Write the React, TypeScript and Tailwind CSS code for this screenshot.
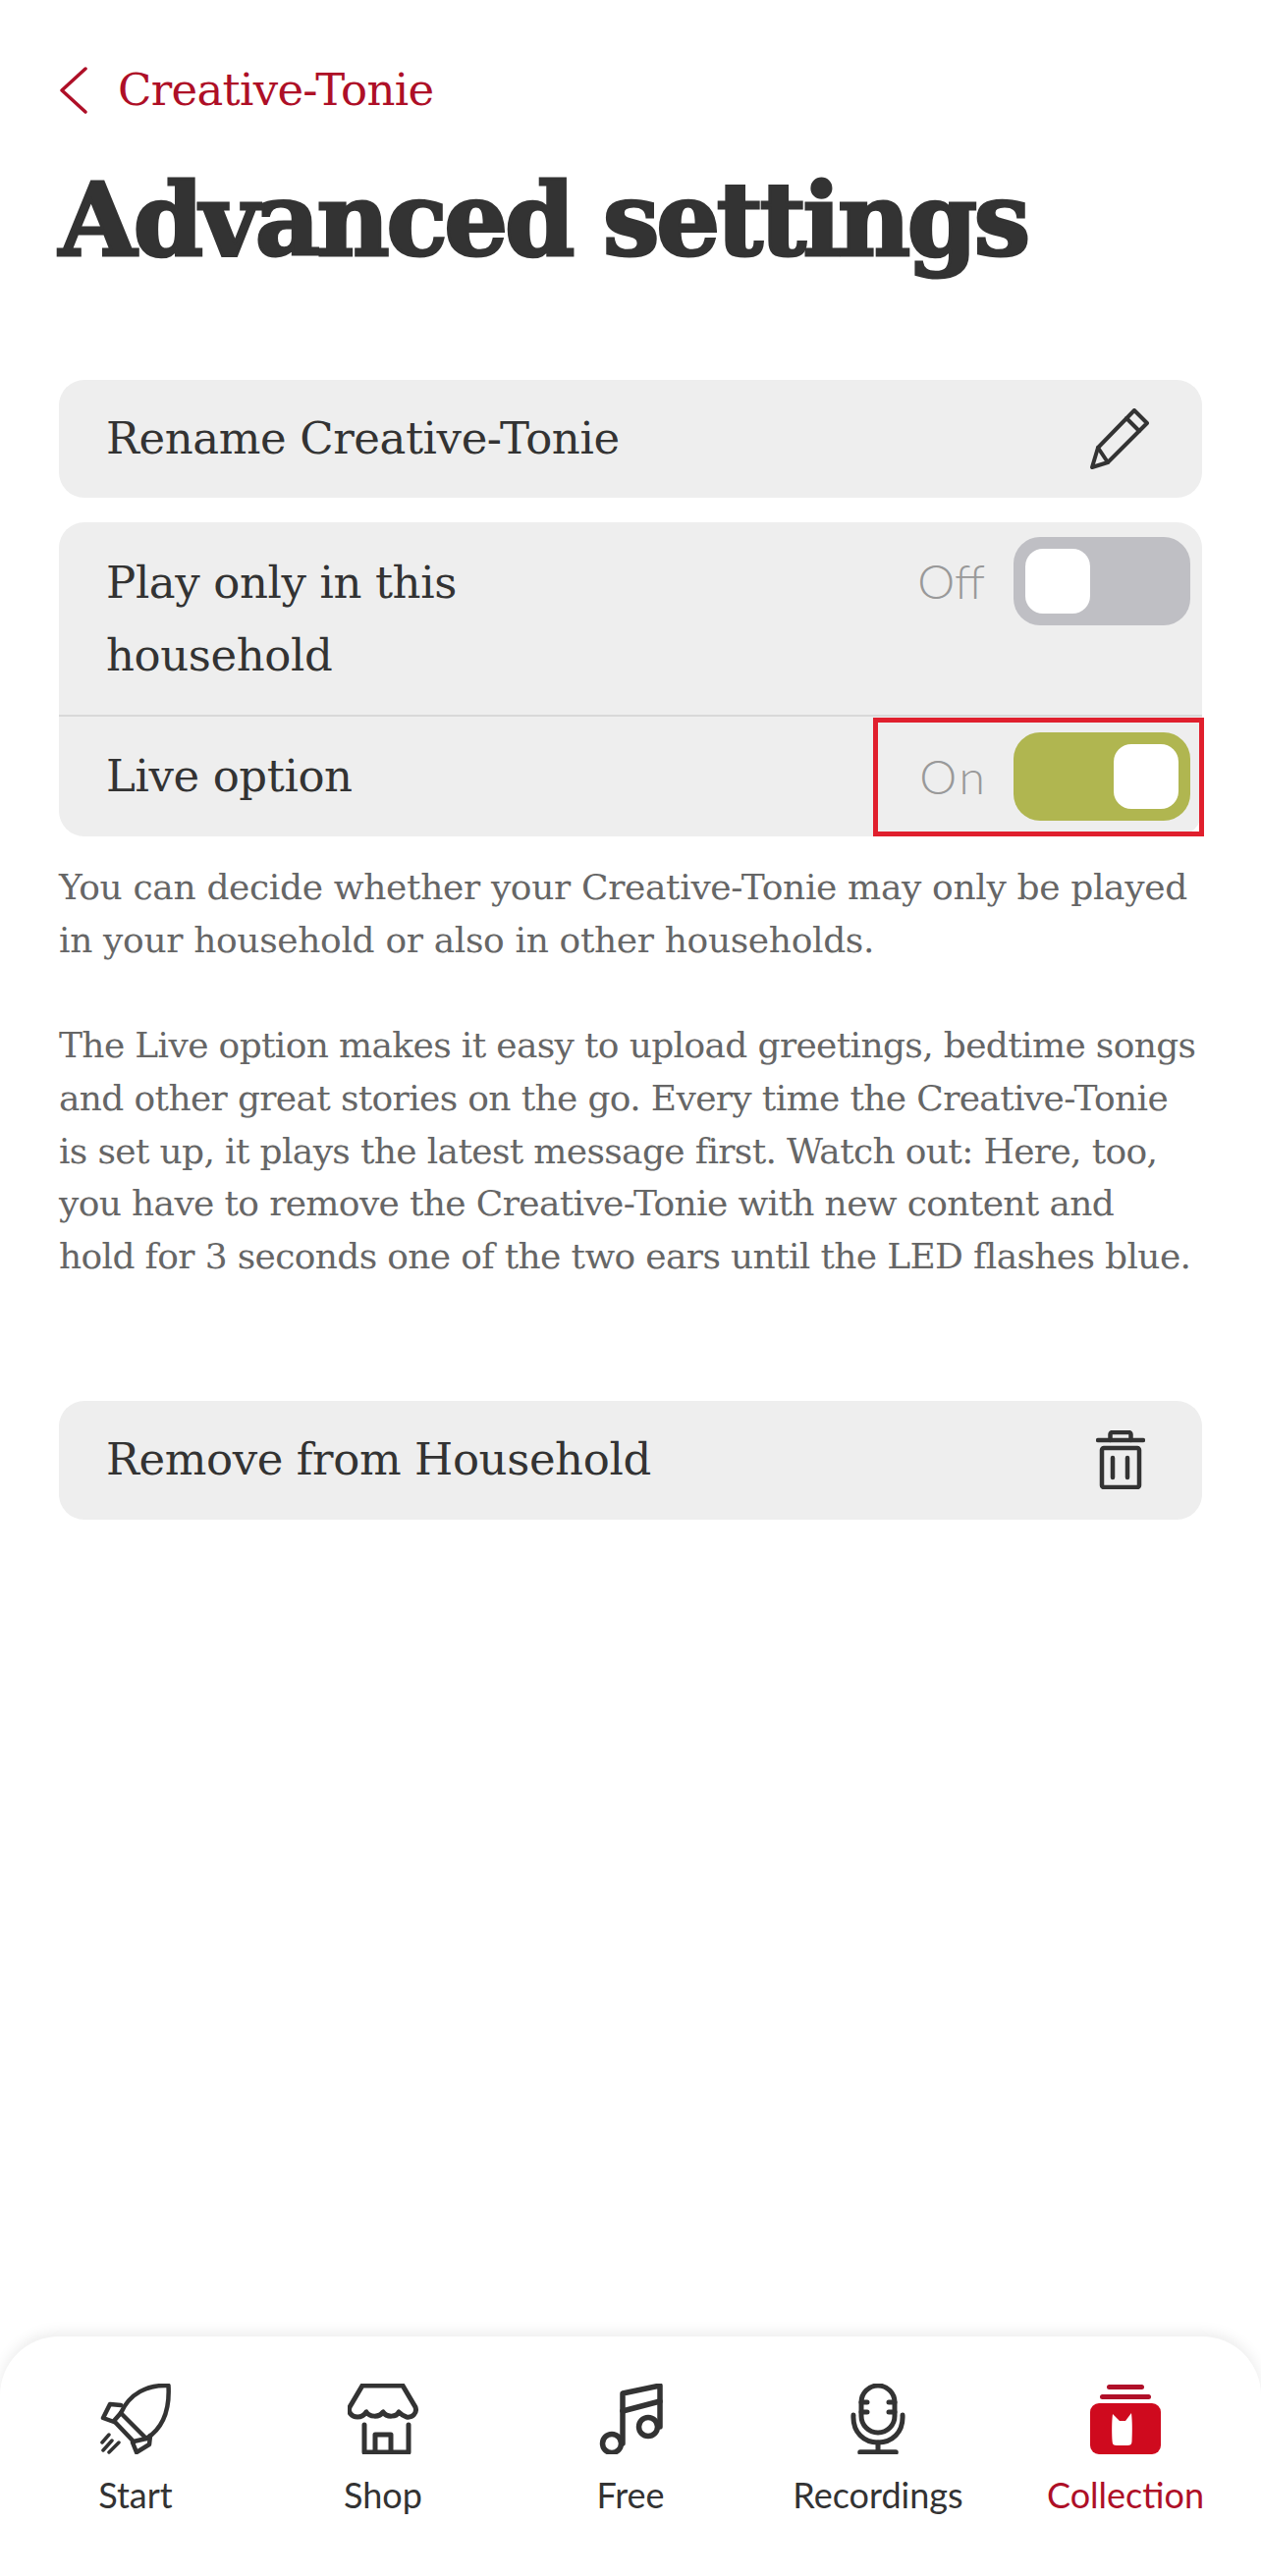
import React from "react";

const Rocket = () => (
  <svg width="72" height="72" viewBox="0 0 72 72" fill="none" stroke="#333" strokeWidth="4.5" strokeLinecap="round" strokeLinejoin="round">
    <path d="M69.5 2C48 1 30 10 21 30L47 56C63 46 71 28 69.5 2Z" />
    <path d="M21 30L14 38L34 59L47 56" />
    <path d="M21 22L10 21L3 35L14 39" />
    <path d="M51 53L50 62L37 70L33 60" />
    <path d="M9 52L2 60M19 60L9 70M12 58L3 68" strokeWidth="3.5" />
  </svg>
);
const Shop = () => (
  <svg width="72" height="72" viewBox="0 0 72 72" fill="none" stroke="#333" strokeWidth="5" strokeLinecap="round" strokeLinejoin="round">
    <path d="M15 2H56L69 24C71 30 66 35 60 34C56 33 54 31 52 29C50 34 40 35 36 29C32 35 22 34 19 29C17 32 14 34 10 34C4 34 0 29 2 24Z" />
    <path d="M17 42V70H62V42" />
    <path d="M28 69V52H44V69" />
  </svg>
);
const Note = () => (
  <svg width="68" height="72" viewBox="0 0 68 72" fill="none" stroke="#333" strokeWidth="5.5" strokeLinecap="round" strokeLinejoin="round">
    <circle cx="15" cy="61" r="9.5" />
    <circle cx="52" cy="44" r="9.5" />
    <path d="M26 61V10L64 2V44" />
    <path d="M26 28L64 18" />
  </svg>
);
const Mic = () => (
  <svg width="56" height="72" viewBox="0 0 56 72" fill="none" stroke="#333" strokeWidth="5" strokeLinecap="round" strokeLinejoin="round">
    <rect x="11" y="2" width="34" height="48" rx="17" />
    <path d="M11 19H17M11 29H17M45 19H39M45 29H39" />
    <path d="M3 32C2 50 14 60 28 60C42 60 54 50 53 32" />
    <path d="M28 60V70" />
    <path d="M10 70H46" strokeWidth="5.5" />
  </svg>
);
const Collection = () => (
  <svg width="72" height="72" viewBox="0 0 72 72">
    <rect x="17" y="1" width="38" height="5" rx="2.5" fill="#b01029" />
    <rect x="10" y="11" width="52" height="5" rx="2.5" fill="#b01029" />
    <rect x="0" y="20" width="72" height="52" rx="9" fill="#cf0a1e" />
    <path d="M23 31L30 38H36L42 30C43 38 43 50 42.5 59C42.3 62 41 63 38 63H27C24 63 22.8 62 22.6 59C22 50 22 38 23 31Z" fill="#fff" />
  </svg>
);
const Pencil = () => (
  <svg width="60" height="62" viewBox="0 0 60 62" fill="none" stroke="#333" strokeWidth="4" strokeLinecap="round" strokeLinejoin="round">
    <path d="M45 2L58 15L18 55L2 60L8 40Z" />
    <path d="M37 10L50 23" />
    <path d="M8 40L18 55" />
  </svg>
);
const Trash = () => (
  <svg width="50" height="60" viewBox="0 0 50 60" fill="none" stroke="#333" strokeWidth="4.5" strokeLinecap="round" strokeLinejoin="round">
    <path d="M2 10H48" />
    <path d="M14.5 10V4C14.5 3 15.5 2 16.5 2H33.5C34.5 2 35.5 3 35.5 4V10" />
    <rect x="6" y="18" width="38" height="40" rx="2" />
    <path d="M17 28V48M32 28V48" />
  </svg>
);

const Toggle = ({ on }: { on: boolean }) => (
  <div className={`flex h-[90px] w-[180px] items-center rounded-[27px] px-[12px] ${on ? "justify-end bg-[#b0b650]" : "justify-start bg-[#bfbfc4]"}`}>
    <div className="h-[66px] w-[66px] rounded-[18px] bg-white" />
  </div>
);

const NavItem = ({ icon, label, active }: { icon: React.ReactNode; label: string; active?: boolean }) => (
  <div className="flex flex-col items-center">
    <div className="flex h-[72px] items-center justify-center">{icon}</div>
    <span className={`mt-[20px] font-['Lato',sans-serif] text-[36px] leading-[42px] ${active ? "text-[#ae0f27]" : "text-[#333]"}`}>{label}</span>
  </div>
);

const slab = "font-['DejaVu_Serif',serif]";

export default function App() {
  return (
    <div className="flex h-[2624px] w-[1284px] flex-col overflow-hidden bg-white text-[#333]">
      <div className="flex flex-1 flex-col px-[60px]">
        <div className="mt-[68px] flex h-[48px] items-center">
          <svg width="30" height="48" viewBox="0 0 30 48" fill="none" stroke="#ae0f27" strokeWidth="3.5" strokeLinecap="round" strokeLinejoin="round" className="shrink-0">
            <path d="M27 2L3 24L27 46" />
          </svg>
          <span className={`${slab} ml-[30px] text-[45px] leading-[48px] tracking-[-0.7px] text-[#ae0f27]`}>Creative-Tonie</span>
        </div>
        <h1 className={`${slab} mt-[48px] text-[102px] leading-[120px] font-black tracking-[-3.3px] whitespace-nowrap text-[#333] [-webkit-text-stroke:3px_#333]`}>Advanced settings</h1>

        <div className="mt-[103px] flex h-[120px] items-center justify-between rounded-[26px] bg-[#eeeeee] pr-[54px] pl-[48px]">
          <span className={`${slab} text-[45px] tracking-[-0.4px]`}>Rename Creative-Tonie</span>
          <Pencil />
        </div>

        <div className="relative mt-[25px] rounded-[26px] bg-[#eeeeee]">
          <div className="flex h-[198px] items-start justify-between border-b-2 border-[#d8d8d8] pt-[15px] pr-[12px] pl-[48px]">
            <span className={`${slab} pt-[10px] text-[45px] leading-[74px] tracking-[-0.4px]`}>
              Play only in this
              <br />
              household
            </span>
            <div className="flex items-center gap-[29px]">
              <span className="font-['Lato',sans-serif] text-[48px] font-light text-[#999]">Off</span>
              <Toggle on={false} />
            </div>
          </div>
          <div className="flex h-[122px] items-center justify-between pr-[12px] pl-[48px]">
            <span className={`${slab} text-[45px] tracking-[-0.4px]`}>Live option</span>
            <div className="flex items-center gap-[26px]">
              <span className="font-['Lato',sans-serif] text-[48px] font-light tracking-[3px] text-[#999]">On</span>
              <Toggle on />
            </div>
          </div>
          <div className="absolute top-[199px] left-[829px] h-[121px] w-[337px] border-[5px] border-[#e01f2d]" />
        </div>

        <div className={`${slab} mt-[25px] text-[36px] leading-[53.7px] text-[#666]`}>
          <p className="tracking-[-0.35px]">You can decide whether your Creative-Tonie may only be played in your household or also in other households.</p>
          <p className="mt-[53.7px] pr-[4px] tracking-[-0.65px]">The Live option makes it easy to upload greetings, bedtime songs and other great stories on the go. Every time the Creative-Tonie is set up, it plays the latest message first. Watch out: Here, too, you have to remove the Creative-Tonie with new content and hold for 3 seconds one of the two ears until the LED flashes blue.</p>
        </div>

        <div className="mt-[120px] flex h-[121px] items-center justify-between rounded-[26px] bg-[#eeeeee] pr-[58px] pl-[48px]">
          <span className={`${slab} text-[45px] tracking-[-0.4px]`}>Remove from Household</span>
          <Trash />
        </div>
      </div>

      <nav className="grid h-[244px] shrink-0 grid-cols-5 rounded-t-[60px] bg-white px-[12px] pt-[48px] shadow-[0_-4px_14px_rgba(0,0,0,0.08)]">
        <NavItem icon={<Rocket />} label="Start" />
        <NavItem icon={<Shop />} label="Shop" />
        <NavItem icon={<Note />} label="Free" />
        <NavItem icon={<Mic />} label="Recordings" />
        <NavItem icon={<Collection />} label="Collection" active />
      </nav>
    </div>
  );
}
